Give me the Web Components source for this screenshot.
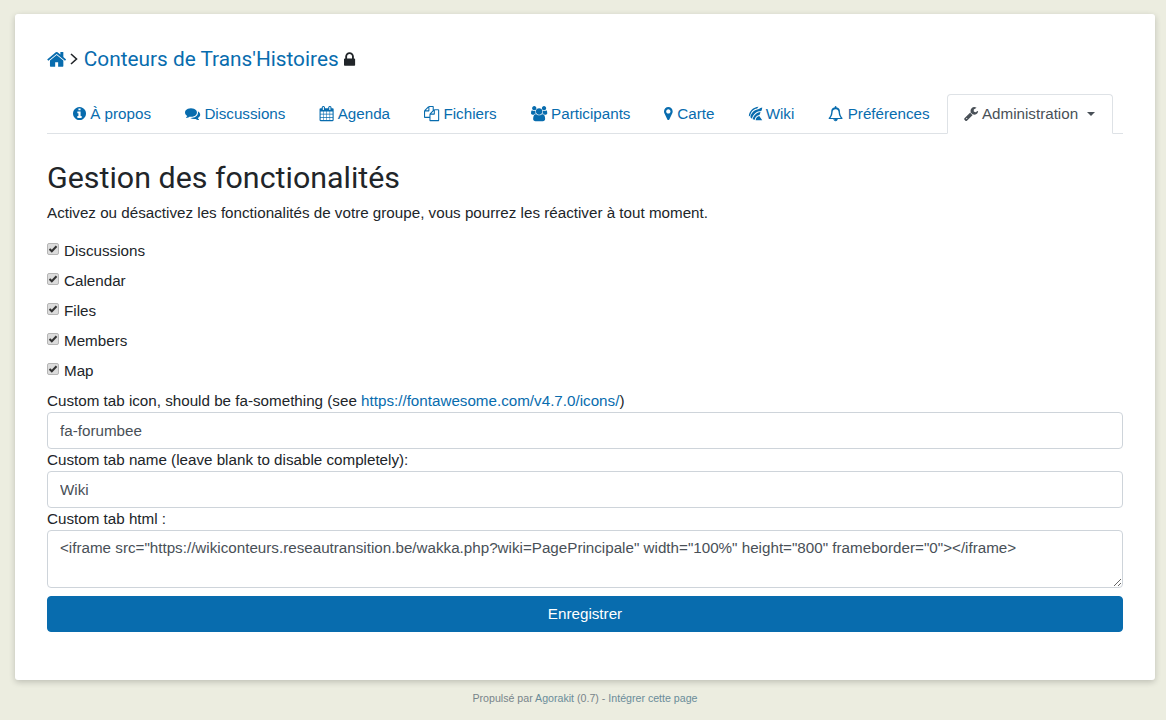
<!DOCTYPE html>
<html lang="fr">
<head>
<meta charset="utf-8">
<title>Gestion des fonctionalités</title>
<style>
  html, body { margin: 0; height: 100%; }
  body { background: #ecede0; font-family: "Liberation Sans", Arial, sans-serif; font-size: 15.2px; color: #212529; overflow: hidden; }
</style>
</head>
<body>

<app-card>
  <group-title>Conteurs de Trans'Histoires</group-title>
  <tab-bar></tab-bar>
  <features-form></features-form>
</app-card>
<app-footer></app-footer>

<script>
// icones font awesome 4.7 en svg
const ICONS = {
  home: ['64 0 1664 1792', 'M1472 992v480q0 26-19 45t-45 19h-384v-384h-256v384h-384q-26 0-45-19t-19-45v-480q0-1 .5-3t.5-3l575-474 575 474q1 2 1 6zm223-69l-62 74q-8 9-21 11h-3q-13 0-21-7l-692-577-692 577q-12 8-24 7-13-2-21-11l-62-74q-8-10-7-23.5t11-21.5l719-599q32-26 76-26t76 26l244 204v-195q0-14 9-23t23-9h192q14 0 23 9t9 23v408l219 182q10 8 11 21.5t-7 23.5z'],
  lock: ['320 0 1152 1792', 'M640 768h512v-192q0-106-75-181t-181-75-181 75-75 181v192zm832 96v576q0 40-28 68t-68 28h-960q-40 0-68-28t-28-68v-576q0-40 28-68t68-28h32v-192q0-184 132-316t316-132 316 132 132 316v192h32q40 0 68 28t28 68z'],
  info: ['128 0 1536 1792', 'M1152 1376v-160q0-14-9-23t-23-9h-96v-512q0-14-9-23t-23-9h-320q-14 0-23 9t-9 23v160q0 14 9 23t23 9h96v320h-96q-14 0-23 9t-9 23v160q0 14 9 23t23 9h448q14 0 23-9t9-23zm-128-896v-160q0-14-9-23t-23-9h-192q-14 0-23 9t-9 23v160q0 14 9 23t23 9h192q14 0 23-9t9-23zm640 416q0 209-103 385.5t-279.5 279.5-385.5 103-385.5-103-279.5-279.5-103-385.5 103-385.5 279.5-279.5 385.5-103 385.5 103 279.5 279.5 103 385.5z'],
  comments: ['0 0 1792 1792', 'M1408 768q0 139-94 257t-256.5 186.5-353.5 68.5q-86 0-176-16-124 88-278 128-36 9-86 16h-3q-11 0-20.5-8t-11.5-21q-1-3-1-6.5t.5-6.5 2-6l2.5-5 3.5-5.5 4-5 4.5-5 4-4.5q5-6 23-25t26-29.5 22.5-29 25-38.5 20.5-44q-124-72-195-177t-71-224q0-139 94-257t256.5-186.5 353.5-68.5 353.5 68.5 256.5 186.5 94 257zm384 256q0 120-71 224.5t-195 176.5q10 24 20.5 44t25 38.5 22.5 29 26 29.5 23 25q1 1 4 4.5t4.5 5 4 5 3.5 5.5l2.5 5 2 6 .5 6.5-1 6.5q-3 14-13 22t-22 7q-50-7-86-16-154-40-278-128-90 16-176 16-271 0-472-132 58 4 88 4 161 0 309-45t264-129q125-92 192-212t67-254q0-77-23-152 129 71 204 178t75 230z'],
  calendar: ['0 0 1664 1792', 'M192 1664h288v-288h-288v288zm352 0h320v-288h-320v288zm-352-352h288v-320h-288v320zm352 0h320v-320h-320v320zm-352-384h288v-288h-288v288zm736 736h320v-288h-320v288zm-384-736h320v-288h-320v288zm768 736h288v-288h-288v288zm-384-352h320v-320h-320v320zm-352-864v-288q0-13-9.5-22.5t-22.5-9.5h-64q-13 0-22.5 9.5t-9.5 22.5v288q0 13 9.5 22.5t22.5 9.5h64q13 0 22.5-9.5t9.5-22.5zm736 864h288v-320h-288v320zm-384-384h320v-288h-320v288zm384 0h288v-288h-288v288zm32-480v-288q0-13-9.5-22.5t-22.5-9.5h-64q-13 0-22.5 9.5t-9.5 22.5v288q0 13 9.5 22.5t22.5 9.5h64q13 0 22.5-9.5t9.5-22.5zm384-64v1280q0 52-38 90t-90 38h-1408q-52 0-90-38t-38-90v-1280q0-52 38-90t90-38h128v-96q0-66 47-113t113-47h64q66 0 113 47t47 113v96h384v-96q0-66 47-113t113-47h64q66 0 113 47t47 113v96h128q52 0 90 38t38 90z'],
  files: ['0 0 1792 1792', 'M1696 384q40 0 68 28t28 68v1216q0 40-28 68t-68 28h-960q-40 0-68-28t-28-68v-288h-544q-40 0-68-28t-28-68v-672q0-40 20-88t48-76l408-408q28-28 76-48t88-20h416q40 0 68 28t28 68v328q68-40 128-40h416zm-544 213l-299 299h299v-299zm-640-384l-299 299h299v-299zm196 647l316-316v-416h-384v416q0 40-28 68t-68 28h-416v640h512v-256q0-40 20-88t48-76zm956 804v-1152h-384v416q0 40-28 68t-68 28h-416v640h896z'],
  users: ['-64 0 1920 1792', 'M529 896q-162 5-265 128h-134q-82 0-138-40.5t-56-118.5q0-353 124-353 6 0 43.5 21t97.5 42.5 119 21.5q67 0 133-23-5 37-5 66 0 139 81 256zm1071 637q0 120-73 189.5t-194 69.5h-874q-121 0-194-69.5t-73-189.5q0-53 3.5-103.5t14-109 26.5-108.5 43-97.5 62-81 85.5-53.5 111.5-20q10 0 43 21.5t73 48 107 48 135 21.5 135-21.5 107-48 73-48 43-21.5q61 0 111.5 20t85.5 53.5 62 81 43 97.5 26.5 108.5 14 109 3.5 103.5zm-1024-1277q0 106-75 181t-181 75-181-75-75-181 75-181 181-75 181 75 75 181zm704 384q0 159-112.5 271.5t-271.5 112.5-271.5-112.5-112.5-271.5 112.5-271.5 271.5-112.5 271.5 112.5 112.5 271.5zm576 225q0 78-56 118.5t-138 40.5h-134q-103-123-265-128 81-117 81-256 0-29-5-66 66 23 133 23 59 0 119-21.5t97.5-42.5 43.5-21q124 0 124 353zm-128-609q0 106-75 181t-181 75-181-75-75-181 75-181 181-75 181 75 75 181z'],
  marker: ['384 0 1024 1792', 'M1152 640q0-106-75-181t-181-75-181 75-75 181 75 181 181 75 181-75 75-181zm256 0q0 109-33 179l-364 774q-16 33-47.5 52t-67.5 19-67.5-19-46.5-52l-365-774q-33-70-33-179 0-212 150-362t362-150 362 150 150 362z'],
  // forumbee, bandes en arc et triangle en bas a droite
  forumbee: ['0 0 1536 1792', 'M100 1240C110 620 610 120 1250 90C1170 160 1110 230 1070 300C660 380 340 690 260 1120ZM280 1340C340 830 740 430 1290 350C1400 270 1530 210 1680 180C1680 320 1640 460 1570 590C1020 600 570 980 470 1510ZM550 1570C620 1120 1020 760 1480 700C1440 850 1400 970 1350 1060C1050 1090 850 1280 800 1630ZM900 1680C940 1410 1110 1230 1330 1190L1680 1680Z'],
  bell: ['0 0 1792 1792', 'M912 1696q0-16-16-16-59 0-101.5-42.5t-42.5-101.5q0-16-16-16t-16 16q0 73 51.5 124.5t124.5 51.5q16 0 16-16zm816-288q0 52-38 90t-90 38h-448q0 106-75 181t-181 75-181-75-75-181h-448q-52 0-90-38t-38-90q50-42 91-88t85-119.5 74.5-158.5 50-206 19.5-260q0-152 117-282.5t307-158.5q-8-19-8-39 0-40 28-68t68-28 68 28 28 68q0 20-8 39 190 28 307 158.5t117 282.5q0 139 19.5 260t50 206 74.5 158.5 85 119.5 91 88zM299 1408H1493Q1245 1130 1245 704Q1245 560 1143 462T896 384T649 462T547 704Q547 1130 299 1408Z'],
  wrench: ['64 0 1664 1792', 'M448 1472q0-26-19-45t-45-19-45 19-19 45 19 45 45 19 45-19 19-45zm644-420l-682 682q-37 37-90 37-52 0-91-37l-106-108q-38-36-38-90 0-53 38-91l681-681q39 98 114.5 173.5t173.5 114.5zm634-435q0 39-23 106-47 134-164.5 217.5t-258.5 83.5q-185 0-316.5-131.5t-131.5-316.5 131.5-316.5 316.5-131.5q58 0 121.5 16.5t107.5 46.5q16 11 16 28t-16 28l-293 169v224l193 107q5-3 79-48.5t135.5-81 70.5-35.5q15 0 23.5 10t8.5 25z']
};

class FaIcon extends HTMLElement {
  connectedCallback() {
    const [box, d] = ICONS[this.getAttribute('name')];
    const [, , w, h] = box.split(' ').map(Number);
    // meme rapport que la fonte : 1792 unites = 1em
    const width = w / h;
    this.attachShadow({ mode: 'open' }).innerHTML = `
      <style>
        :host { display: inline-block; line-height: 0; vertical-align: -0.143em; }
        svg { height: 1em; width: ${width}em; fill: currentColor; display: block; overflow: visible; }
      </style>
      <svg viewBox="${box}" fill-rule="evenodd"><path d="${d}"/></svg>`;
  }
}

class AppCard extends HTMLElement {
  constructor() {
    super();
    this.attachShadow({ mode: 'open' }).innerHTML = `
      <style>
        :host {
          display: block; box-sizing: border-box;
          width: 1140px; height: 666px; margin: 14px 0 0 15px;
          padding: 32px; background: #fff; border-radius: 3px;
          box-shadow: 0 2px 6px rgba(0,0,0,.2);
        }
      </style>
      <slot></slot>`;
  }
}

class GroupTitle extends HTMLElement {
  constructor() {
    super();
    this.attachShadow({ mode: 'open' }).innerHTML = `
      <style>
        :host {
          display: flex; align-items: center; height: 26px;
          font-family: Roboto, sans-serif; font-size: 20.8px; color: #212529;
          white-space: nowrap;
        }
        .home { color: #086cae; display: flex; margin-right: 4px; }
        .sep { margin-right: 5.5px; line-height: 26px; }
        .sep svg { display: block; width: 8px; height: 12px; fill: none; stroke: #212529; stroke-width: 1.6; }
        .name { color: #086cae; }
        .lock { font-size: 17.3px; color: #212529; margin-left: 5px; display: flex; margin-top: 1px; }
      </style>
      <span class="home"><fa-icon name="home"></fa-icon></span>
      <span class="sep"><svg viewBox="0 0 8 12"><path d="M1 1l5.5 5L1 11"/></svg></span>
      <span class="name"><slot></slot></span>
      <span class="lock"><fa-icon name="lock"></fa-icon></span>`;
  }
}

class NavTab extends HTMLElement {
  constructor() {
    super();
    this.attachShadow({ mode: 'open' }).innerHTML = `
      <style>
        :host {
          display: block; box-sizing: border-box; height: 40px; margin-bottom: -1px;
          padding: 0 16px; line-height: 38px; border: 1px solid transparent;
          border-radius: 4px 4px 0 0; color: #086cae; white-space: nowrap;
        }
        :host([active]) { color: #495057; background: #fff; border-color: #dee2e6 #dee2e6 #fff; }
        .ic { margin-right: 4.2px; }
        .caret {
          display: inline-block; margin: 0 1px 0 9px; vertical-align: 3px;
          border-top: 4px solid; border-left: 4px solid transparent; border-right: 4px solid transparent;
        }
      </style>
      <fa-icon class="ic" name="${this.getAttribute('icon')}"></fa-icon><slot></slot>${this.hasAttribute('caret') ? '<span class="caret"></span>' : ''}`;
  }
}

class TabBar extends HTMLElement {
  constructor() {
    super();
    this.attachShadow({ mode: 'open' }).innerHTML = `
      <style>
        :host {
          display: flex; box-sizing: border-box; height: 40px; margin-top: 22px;
          padding-left: 9px; border-bottom: 1px solid #dee2e6;
        }
      </style>
      <nav-tab icon="info">À propos</nav-tab>
      <nav-tab icon="comments">Discussions</nav-tab>
      <nav-tab icon="calendar">Agenda</nav-tab>
      <nav-tab icon="files">Fichiers</nav-tab>
      <nav-tab icon="users">Participants</nav-tab>
      <nav-tab icon="marker">Carte</nav-tab>
      <nav-tab icon="forumbee">Wiki</nav-tab>
      <nav-tab icon="bell">Préférences</nav-tab>
      <nav-tab icon="wrench" active caret>Administration</nav-tab>`;
  }
}

class FeatureCheck extends HTMLElement {
  constructor() {
    super();
    this.attachShadow({ mode: 'open' }).innerHTML = `
      <style>
        :host { display: flex; height: 30px; align-items: flex-start; }
        .box {
          box-sizing: border-box; width: 12px; height: 12px; margin: 3px 5px 0 0; flex: none;
          border: 1px solid #b5b5b5; border-radius: 2px; background: #dcdcdc;
        }
        .box svg { display: block; width: 10px; height: 10px; fill: none; stroke: #333; stroke-width: 2; }
        label { line-height: 22px; }
      </style>
      <span class="box" role="checkbox" aria-checked="true"><svg viewBox="0 0 10 10"><path d="M1.5 5l2.3 2.3L8.5 2.2"/></svg></span><label><slot></slot></label>`;
  }
}

class FeaturesForm extends HTMLElement {
  constructor() {
    super();
    this.attachShadow({ mode: 'open' }).innerHTML = `
      <style>
        :host { display: block; }
        h1 { font: 400 30.4px/36px Roboto, sans-serif; margin: 26px 0 6px; color: #212529; }
        p { margin: 0 0 16px; line-height: 22px; }
        a { color: #086cae; text-decoration: none; }
        .lab { display: block; line-height: 22px; }
        input, textarea {
          display: block; box-sizing: border-box; width: 100%; margin: 0;
          border: 1px solid #ced4da; border-radius: 4px; background: #fff;
          font: 15.2px "Liberation Sans", Arial, sans-serif; color: #495057;
          padding: 8px 12px; outline: none;
        }
        input { height: 37px; }
        textarea { height: 58px; line-height: 22px; padding-top: 6px; }
        button {
          display: block; width: 100%; height: 36px; margin-top: 8px; padding: 0 0 2px;
          background: #086cae; color: #fff; border: 1px solid #086cae; border-radius: 4px;
          font: 15.2px "Liberation Sans", Arial, sans-serif;
        }
      </style>
      <h1>Gestion des fonctionalités</h1>
      <p>Activez ou désactivez les fonctionalités de votre groupe, vous pourrez les réactiver à tout moment.</p>
      <div>
        <feature-check>Discussions</feature-check>
        <feature-check>Calendar</feature-check>
        <feature-check>Files</feature-check>
        <feature-check>Members</feature-check>
        <feature-check>Map</feature-check>
      </div>
      <span class="lab">Custom tab icon, should be fa-something (see <a href="#">https://fontawesome.com/v4.7.0/icons/</a>)</span>
      <input value="fa-forumbee">
      <span class="lab">Custom tab name (leave blank to disable completely):</span>
      <input value="Wiki">
      <span class="lab">Custom tab html :</span>
      <textarea>&lt;iframe src="https://wikiconteurs.reseautransition.be/wakka.php?wiki=PagePrincipale" width="100%" height="800" frameborder="0"&gt;&lt;/iframe&gt;</textarea>
      <button>Enregistrer</button>`;
  }
}

class AppFooter extends HTMLElement {
  constructor() {
    super();
    this.attachShadow({ mode: 'open' }).innerHTML = `
      <style>
        :host { display: block; width: 1140px; margin: 11px 0 0 15px; text-align: center; font-size: 10.64px; line-height: 14px; color: #78848a; }
        a { color: #6a8c99; text-decoration: none; }
      </style>
      Propulsé par <a href="#">Agorakit</a> (0.7) - <a href="#">Intégrer cette page</a>`;
  }
}

customElements.define('fa-icon', FaIcon);
customElements.define('app-card', AppCard);
customElements.define('group-title', GroupTitle);
customElements.define('nav-tab', NavTab);
customElements.define('tab-bar', TabBar);
customElements.define('feature-check', FeatureCheck);
customElements.define('features-form', FeaturesForm);
customElements.define('app-footer', AppFooter);
</script>
</body>
</html>
